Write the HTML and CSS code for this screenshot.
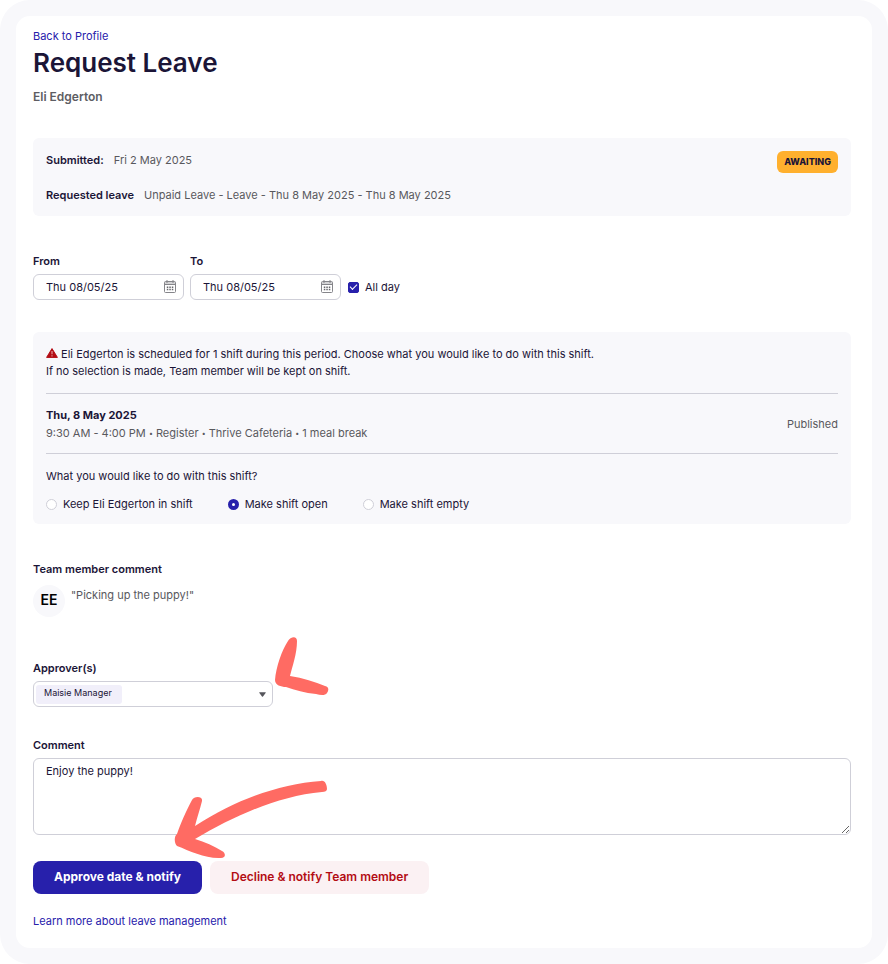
FILE: index.html
```html
<!DOCTYPE html>
<html lang="en">
<head>
	<meta charset="UTF-8">
	<meta name="viewport" content="width=device-width, initial-scale=1">
	<title>Request Leave</title>
	<link rel="stylesheet" href="styles.css">
</head>
<body>
    <div class="frame">
        <main class="panel">
            <a class="link" href="#">Back to Profile</a>
            <h1>Request Leave</h1>
            <p class="member">Eli Edgerton</p>

            <section class="box summary">
                <dl class="details">
                    <div class="detail">
                        <dt>Submitted:</dt>
                        <dd>Fri 2 May 2025</dd>
                    </div>
                    <div class="detail">
                        <dt>Requested leave</dt>
                        <dd>Unpaid Leave - Leave - Thu 8 May 2025 - Thu 8 May 2025</dd>
                    </div>
                </dl>
                <span class="badge">AWAITING</span>
            </section>

            <form>
                <div class="dates">
                    <div class="field">
                        <label for="from">From</label>
                        <div class="control date">
                            <input type="text" id="from" value="Thu 08/05/25">
                            <svg class="calendar" width="12" height="14" viewBox="0 0 12 14">
                                <path d="M.5 2h11v2.5H.5z" fill="#d4d4d6"/>
                                <path d="M1.5 1.5h9a1 1 0 0 1 1 1v9a1 1 0 0 1-1 1h-9a1 1 0 0 1-1-1v-9a1 1 0 0 1 1-1zM.5 4.5h11M3 0v3M9 0v3" fill="none" stroke="#85858a"/>
                                <path d="M2.8 7.2h6.6M2.8 9.4h6.6" stroke="#66666b" stroke-width="1.5" stroke-dasharray="1.5 1"/>
                            </svg>
                        </div>
                    </div>
                    <div class="field">
                        <label for="to">To</label>
                        <div class="control date">
                            <input type="text" id="to" value="Thu 08/05/25">
                            <svg class="calendar" width="12" height="14" viewBox="0 0 12 14">
                                <path d="M.5 2h11v2.5H.5z" fill="#d4d4d6"/>
                                <path d="M1.5 1.5h9a1 1 0 0 1 1 1v9a1 1 0 0 1-1 1h-9a1 1 0 0 1-1-1v-9a1 1 0 0 1 1-1zM.5 4.5h11M3 0v3M9 0v3" fill="none" stroke="#85858a"/>
                                <path d="M2.8 7.2h6.6M2.8 9.4h6.6" stroke="#66666b" stroke-width="1.5" stroke-dasharray="1.5 1"/>
                            </svg>
                        </div>
                    </div>
                    <label class="all-day"><input type="checkbox" checked>All day</label>
                </div>

                <section class="box shifts">
                    <p class="notice">
                        <svg class="warning" width="12" height="10" viewBox="0 0 12 10">
                            <path d="M6 .6 11.4 9.4H.6z" fill="#b30c14" stroke="#b30c14" stroke-linejoin="round"/>
                            <path d="M6 3v3.2M6 7.2v1.2" stroke="#e3a5a8" stroke-width="1.1"/>
                        </svg>
                        Eli Edgerton is scheduled for 1 shift during this period. Choose what you would like to do with this shift.<br>
                        If no selection is made, Team member will be kept on shift.
                    </p>
                    <div class="shift">
                        <div>
                            <h2>Thu, 8 May 2025</h2>
                            <p>9:30 AM - 4:00 PM <i>•</i> Register <i>•</i> Thrive Cafeteria <i>•</i> 1 meal break</p>
                        </div>
                        <span>Published</span>
                    </div>
                    <fieldset>
                        <legend>What you would like to do with this shift?</legend>
                        <div class="options">
                            <label><input type="radio" name="shift">Keep Eli Edgerton in shift</label>
                            <label><input type="radio" name="shift" checked>Make shift open</label>
                            <label><input type="radio" name="shift">Make shift empty</label>
                        </div>
                    </fieldset>
                </section>

                <section class="team-comment">
                    <h2>Team member comment</h2>
                    <div class="quote">
                        <span class="avatar">EE</span>
                        <p>"Picking up the puppy!"</p>
                    </div>
                </section>

                <div class="field approvers">
                    <label for="approver">Approver(s)</label>
                    <div class="control picker">
                        <select id="approver">
                            <option>Maisie Manager</option>
                        </select>
                        <svg class="caret" width="7" height="5" viewBox="0 0 7 5"><path d="M.7.3h5.6q.9 0 .3.7L4 4.5q-.5.6-1 0L.4 1Q-.2.3.7.3z" fill="#56565c"/></svg>
                    </div>
                    <svg class="pointer" width="54" height="60" viewBox="0 0 54 60">
                        <path d="M13 5C15 1 22 -1 22 5C22 18 17 31 15 40C28 42 40 46 50 50C54 51 54 54 52 57C50 60 45 59 41 58C30 57 20 54 11 51C6 51 0 49 0 44C1 31 7 14 13 5z" fill="#ff6b63"/>
                    </svg>
                </div>

                <div class="field comment">
                    <label for="comment">Comment</label>
                    <textarea id="comment" class="control">Enjoy the puppy!</textarea>
                    <svg class="arrow" width="154" height="80" viewBox="0 0 154 80">
                        <path d="M147 1C151 0 153 5 153 9C153 11 151 12 148 12C104 16 60 36 21 59C31 62 40 66 48 71C52 73 52 78 47 78C32 79 16 71 3 66C0 63 0 56 3 54C6 45 12 31 18 20C20 16 29 16 28 21C26 29 23 38 21 46C63 19 106 4 147 1z" fill="#ff6b63"/>
                    </svg>
                </div>

                <div class="actions">
                    <button type="submit" class="approve">Approve date &amp; notify</button>
                    <button type="button" class="decline">Decline &amp; notify Team member</button>
                </div>
            </form>

            <a class="link" href="#">Learn more about leave management</a>
        </main>
    </div>
</body>
</html>
```
FILE: styles.css
```css
*{
    box-sizing: border-box;
}
body{
    margin: 0;
    background: #fff;
    color: #1b1537;
    font-family: Inter, "Liberation Sans", sans-serif;
    font-size: 11px;
    line-height: 16px;
}
h1, h2, p, dl, dd{
    margin: 0;
}
input, select, textarea, button{
    margin: 0;
    color: inherit;
    font: inherit;
}
.frame{
    padding: 16px;
    background: #f8f8fb;
    border-radius: 30px;
}
.panel{
    padding: 12px 21px 19px 17px;
    background: #fff;
    border-radius: 14px;
}
.link{
    display: block;
    color: #2720ab;
    text-decoration: none;
}
h1{
    font-size: 26px;
    font-weight: 600;
    line-height: 38px;
}
h2, dt, .field > label{
    font-size: 11px;
    font-weight: 600;
}
.member{
    margin: 7px 0 33px;
    color: #5d5d63;
    font-size: 12px;
    font-weight: 600;
}
.box{
    background: #f8f8fb;
    border-radius: 6px;
}
.summary{
    display: flex;
    justify-content: space-between;
    align-items: flex-start;
    padding: 13px 13px 12px;
    margin-bottom: 37px;
}
.details{
    display: grid;
    gap: 17px;
}
.detail{
    display: flex;
    gap: 10px;
    line-height: 18px;
}
dd, .shift p, .shift span, .quote p{
    color: #58585d;
}
.badge{
    padding: 0 7px;
    background: #ffb02e;
    border-radius: 6px;
    font-size: 9px;
    font-weight: 800;
    line-height: 22px;
}
.field{
    display: grid;
    gap: 5px;
    position: relative;
}
.control{
    border: 1px solid #cfcfd8;
    border-radius: 6px;
    background: #fff;
}
.dates{
    display: flex;
    align-items: flex-end;
    gap: 6px;
}
.date{
    display: flex;
    align-items: center;
    width: 151px;
    height: 26px;
    padding: 0 7px 0 12px;
}
.date input{
    flex: 1;
    min-width: 0;
    padding: 0;
    border: 0;
    outline: 0;
}
.all-day, .options label{
    display: flex;
    align-items: center;
    gap: 6px;
}
.all-day{
    height: 26px;
    padding-left: 1px;
}
input[type="checkbox"], input[type="radio"]{
    appearance: none;
    width: 11px;
    height: 11px;
    border: 1px solid #cfcfd8;
    border-radius: 50%;
    background: #fff;
}
input[type="checkbox"]{
    display: grid;
    place-items: center;
    border-radius: 2px;
}
input[type="checkbox"]:checked{
    border-color: #2720ab;
    background: #2720ab;
}
input[type="checkbox"]:checked::after{
    content: "";
    width: 6px;
    height: 3px;
    border: solid #fff;
    border-width: 0 0 1px 1px;
    transform: translateY(-1px) rotate(-45deg);
}
input[type="radio"]:checked{
    border: 4px solid #2720ab;
}
.shifts{
    margin: 32px 0 37px;
    padding: 14px 13px 11px;
}
.notice{
    line-height: 17px;
}
.shift{
    display: flex;
    justify-content: space-between;
    align-items: center;
    margin: 13px 0;
    padding: 12px 0 11px;
    border: solid #cfcfd8;
    border-width: 1px 0;
    line-height: 18px;
}
.shift h2{
    font-weight: 700;
}
.shift i{
    font-size: 7px;
    font-style: normal;
    line-height: 1;
    vertical-align: 1px;
}
fieldset{
    margin: 0;
    padding: 0;
    border: 0;
    line-height: 18px;
}
legend{
    padding: 0;
}
.options{
    display: flex;
    gap: 35px;
    margin-top: 10px;
}
.quote{
    display: flex;
    gap: 6px;
    margin-top: 8px;
}
.quote p{
    line-height: 20px;
}
.avatar{
    width: 32px;
    height: 32px;
    background: #f8f8fb;
    border-radius: 50%;
    color: #000;
    font-size: 14px;
    font-weight: 600;
    line-height: 30px;
    text-align: center;
}
.approvers{
    width: 240px;
    margin: 43px 0 30px;
}
.picker{
    display: flex;
    justify-content: space-between;
    align-items: center;
    height: 26px;
    padding: 0 6px 0 2px;
}
.picker select{
    appearance: none;
    height: 19px;
    padding: 0 10px 2px 8px;
    border: 0;
    border-radius: 3px;
    background: #f1effa;
    font-size: 9px;
}
.pointer{
    position: absolute;
    top: -24px;
    left: 242px;
}
textarea{
    display: block;
    width: 100%;
    height: 77px;
    padding: 4px 12px;
    resize: vertical;
}
.arrow{
    position: absolute;
    top: 43px;
    left: 141px;
}
.actions{
    display: flex;
    gap: 8px;
    margin: 26px 0 19px;
}
button{
    height: 33px;
    padding: 0 21px 2px;
    border: 0;
    border-radius: 8px;
    font-size: 12px;
    font-weight: 700;
}
.approve{
    background: #2720ab;
    color: #fff;
}
.decline{
    background: #fbf1f3;
    color: #b30c14;
    font-weight: 600;
}
```
